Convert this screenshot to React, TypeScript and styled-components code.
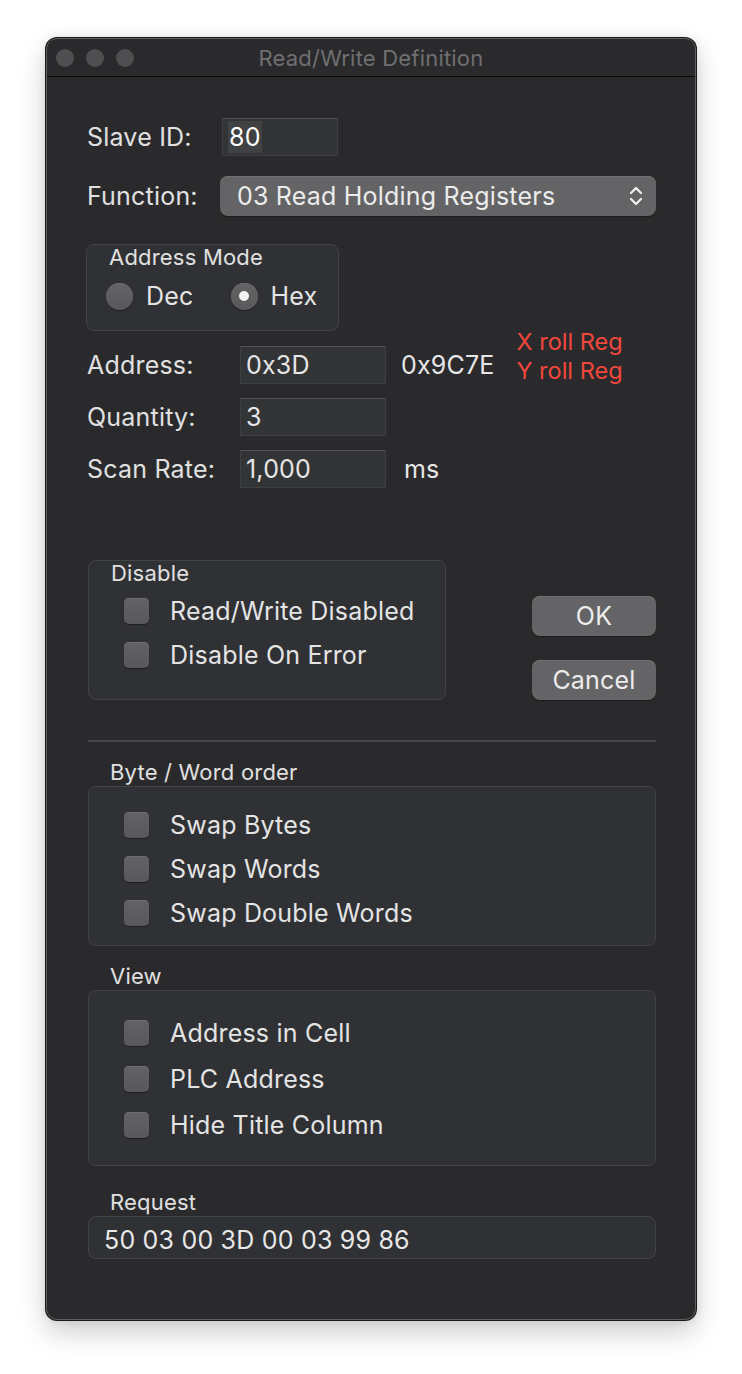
import React from "react";
import styled, { createGlobalStyle } from "styled-components";

const GlobalStyle = createGlobalStyle`
  html, body {
    margin: 0;
    padding: 0;
    background: #ffffff;
  }
  body {
    font-family: Inter, "Noto Sans", "Liberation Sans", sans-serif;
    color: #dedede;
    letter-spacing: 0.2px;
  }
`;

const Page = styled.div`
  padding: 38px 0 0 46px;
  height: 1374px;
  box-sizing: border-box;
`;

const Window = styled.div`
  width: 650px;
  height: 1282px;
  box-sizing: border-box;
  background: #2a2a2c;
  border: 1px solid #5e5e60;
  border-radius: 11px;
  box-shadow: 0 0 0 1px #1a1a1a, 0 12px 28px rgba(0, 0, 0, 0.2),
    0 0 10px rgba(0, 0, 0, 0.1);
  display: flex;
  flex-direction: column;
  overflow: hidden;
`;

const TitleBar = styled.div`
  height: 37px;
  flex-shrink: 0;
  display: flex;
  align-items: center;
  position: relative;
  border-bottom: 1px solid #0c0c0c;
  padding-left: 9px;
`;

const Lights = styled.div`
  display: flex;
  gap: 12px;
`;

const Light = styled.span`
  width: 18px;
  height: 18px;
  border-radius: 50%;
  background: #4f4f51;
`;

const Title = styled.div`
  position: absolute;
  left: 0;
  right: 0;
  text-align: center;
  font-size: 22px;
  color: #6f6f71;
  pointer-events: none;
`;

const Body = styled.div`
  display: flex;
  flex-direction: column;
  padding: 41px 39px 0 40px;
`;

const Row = styled.div<{ $mt?: number; $h?: number }>`
  display: flex;
  align-items: center;
  margin-top: ${(p) => p.$mt ?? 0}px;
  height: ${(p) => p.$h ?? 38}px;
  font-size: 25px;
`;

const Label = styled.div<{ $w: number }>`
  width: ${(p) => p.$w}px;
  flex-shrink: 0;
  font-size: 25px;
  color: #e0e0e0;
`;

const Field = styled.div<{ $w: number }>`
  width: ${(p) => p.$w}px;
  height: 38px;
  box-sizing: border-box;
  background: #333436;
  border: 1px solid #3e3f41;
  border-top-color: #505153;
  display: flex;
  align-items: center;
  padding-left: 5px;
  font-size: 25px;
  color: #e6e6e6;
`;

const Selected = styled.span`
  background: #404143;
  padding: 0 1px;
  line-height: 32px;
  color: #ffffff;
`;

const Popup = styled.div`
  width: 436px;
  height: 40px;
  box-sizing: border-box;
  border-radius: 8px;
  background: #646466;
  box-shadow: 0 1px 1px rgba(0, 0, 0, 0.35), inset 0 1px 0 #717173;
  display: flex;
  align-items: center;
  justify-content: space-between;
  padding: 0 12px 0 17px;
  font-size: 25px;
  color: #ececec;
`;

const GroupBox = styled.div<{ $w?: number; $h: number; $mt?: number }>`
  width: ${(p) => (p.$w ? `${p.$w}px` : "auto")};
  height: ${(p) => p.$h}px;
  box-sizing: border-box;
  margin-top: ${(p) => p.$mt ?? 0}px;
  background: #303134;
  border: 1px solid #434446;
  border-radius: 8px;
  flex-shrink: 0;
`;

const BoxTitle = styled.div`
  font-size: 22px;
  color: #e0e0e0;
  padding: 0 0 0 22px;
  line-height: 24px;
`;

const ModeBox = styled(GroupBox)`
  margin-left: -1px;
`;

const RadioRow = styled.div`
  display: flex;
  align-items: center;
  margin-top: 12px;
  padding-left: 19px;
`;

const RadioItem = styled.label`
  display: flex;
  align-items: center;
  gap: 13px;
  font-size: 25px;
  color: #e4e4e4;
  margin-right: 37px;
`;

const Radio = styled.span<{ $on?: boolean }>`
  width: 27px;
  height: 27px;
  border-radius: 50%;
  background: linear-gradient(#646466, #59595b);
  box-shadow: 0 1px 1px rgba(0, 0, 0, 0.4), inset 0 0.5px 0 #78787a;
  display: flex;
  align-items: center;
  justify-content: center;
  &::after {
    content: "";
    display: ${(p) => (p.$on ? "block" : "none")};
    width: 10px;
    height: 10px;
    border-radius: 50%;
    background: #f2f2f2;
  }
`;

const HexText = styled.div`
  margin-left: 15px;
  font-size: 25px;
  color: #e6e6e6;
`;

const Notes = styled.div`
  align-self: flex-start;
  margin: -19px 0 0 22px;
  color: #f2473c;
  font-size: 23.5px;
  line-height: 29px;
  letter-spacing: 0;
`;

const Unit = styled.div`
  margin-left: 18px;
  font-size: 25px;
  color: #e6e6e6;
`;

const DisableRow = styled.div`
  display: flex;
  margin-top: 72px;
  margin-left: 1px;
`;

const Buttons = styled.div`
  margin-left: auto;
  display: flex;
  flex-direction: column;
  gap: 24px;
  padding-top: 36px;
`;

const Button = styled.div`
  width: 124px;
  height: 40px;
  border-radius: 8px;
  background: #646466;
  box-shadow: 0 1px 1px rgba(0, 0, 0, 0.35), inset 0 1px 0 #717173;
  display: flex;
  align-items: center;
  justify-content: center;
  font-size: 25px;
  color: #ececec;
`;

const CheckList = styled.div<{ $pt: number; $gap: number }>`
  display: flex;
  flex-direction: column;
  gap: ${(p) => p.$gap}px;
  padding: ${(p) => p.$pt}px 0 0 35px;
`;

const CheckItem = styled.label`
  display: flex;
  align-items: center;
  gap: 21px;
  height: 26px;
  font-size: 25px;
  color: #e4e4e4;
`;

const Check = styled.span`
  width: 25px;
  height: 26px;
  box-sizing: border-box;
  border-radius: 5px;
  background: linear-gradient(#636365, #58585a);
  box-shadow: 0 1px 1px rgba(0, 0, 0, 0.4), inset 0 0.5px 0 #78787a;
`;

const Separator = styled.div`
  height: 2px;
  background: #454648;
  margin: 40px 0 0 1px;
`;

const SectionTitle = styled.div<{ $mt: number }>`
  margin-top: ${(p) => p.$mt}px;
  padding-left: 23px;
  font-size: 22px;
  line-height: 24px;
  height: 24px;
  color: #e0e0e0;
`;

const Wide = styled(GroupBox)`
  margin-left: 1px;
`;

const RequestBox = styled(Wide)`
  display: flex;
  align-items: center;
  padding: 4px 0 0 15px;
  font-size: 25px;
  color: #e8e8e8;
`;

function Chevrons() {
  return (
    <svg width="16" height="24" viewBox="0 0 16 24" fill="none">
      <path
        d="M3 9 L8 4 L13 9"
        stroke="#f0f0f0"
        strokeWidth="2.2"
        strokeLinecap="round"
        strokeLinejoin="round"
      />
      <path
        d="M3 15 L8 20 L13 15"
        stroke="#f0f0f0"
        strokeWidth="2.2"
        strokeLinecap="round"
        strokeLinejoin="round"
      />
    </svg>
  );
}

function CheckRow({ label }: { label: string }) {
  return (
    <CheckItem>
      <Check />
      {label}
    </CheckItem>
  );
}

export default function App() {
  return (
    <Page>
      <GlobalStyle />
      <Window>
        <TitleBar>
          <Lights>
            <Light />
            <Light />
            <Light />
          </Lights>
          <Title>Read/Write Definition</Title>
        </TitleBar>
        <Body>
          <Row>
            <Label $w={135}>Slave ID:</Label>
            <Field $w={116}>
              <Selected>80</Selected>
            </Field>
          </Row>
          <Row $mt={20} $h={40}>
            <Label $w={133}>Function:</Label>
            <Popup>
              03 Read Holding Registers
              <Chevrons />
            </Popup>
          </Row>
          <ModeBox $w={253} $h={87} $mt={28}>
            <BoxTitle>Address Mode</BoxTitle>
            <RadioRow>
              <RadioItem>
                <Radio />
                Dec
              </RadioItem>
              <RadioItem>
                <Radio $on />
                Hex
              </RadioItem>
            </RadioRow>
          </ModeBox>
          <Row $mt={15}>
            <Label $w={153}>Address:</Label>
            <Field $w={146}>0x3D</Field>
            <HexText>0x9C7E</HexText>
            <Notes>
              X roll Reg
              <br />
              Y roll Reg
            </Notes>
          </Row>
          <Row $mt={14}>
            <Label $w={153}>Quantity:</Label>
            <Field $w={146}>3</Field>
          </Row>
          <Row $mt={14}>
            <Label $w={153}>Scan Rate:</Label>
            <Field $w={146}>1,000</Field>
            <Unit>ms</Unit>
          </Row>
          <DisableRow>
            <GroupBox $w={358} $h={140}>
              <BoxTitle>Disable</BoxTitle>
              <CheckList $pt={13} $gap={18}>
                <CheckRow label="Read/Write Disabled" />
                <CheckRow label="Disable On Error" />
              </CheckList>
            </GroupBox>
            <Buttons>
              <Button>OK</Button>
              <Button>Cancel</Button>
            </Buttons>
          </DisableRow>
          <Separator />
          <SectionTitle $mt={18}>Byte / Word order</SectionTitle>
          <Wide $h={160} $mt={2}>
            <CheckList $pt={25} $gap={18}>
              <CheckRow label="Swap Bytes" />
              <CheckRow label="Swap Words" />
              <CheckRow label="Swap Double Words" />
            </CheckList>
          </Wide>
          <SectionTitle $mt={18}>View</SectionTitle>
          <Wide $h={176} $mt={2}>
            <CheckList $pt={29} $gap={20}>
              <CheckRow label="Address in Cell" />
              <CheckRow label="PLC Address" />
              <CheckRow label="Hide Title Column" />
            </CheckList>
          </Wide>
          <SectionTitle $mt={24}>Request</SectionTitle>
          <RequestBox $h={43} $mt={2}>
            50 03 00 3D 00 03 99 86
          </RequestBox>
        </Body>
      </Window>
    </Page>
  );
}
